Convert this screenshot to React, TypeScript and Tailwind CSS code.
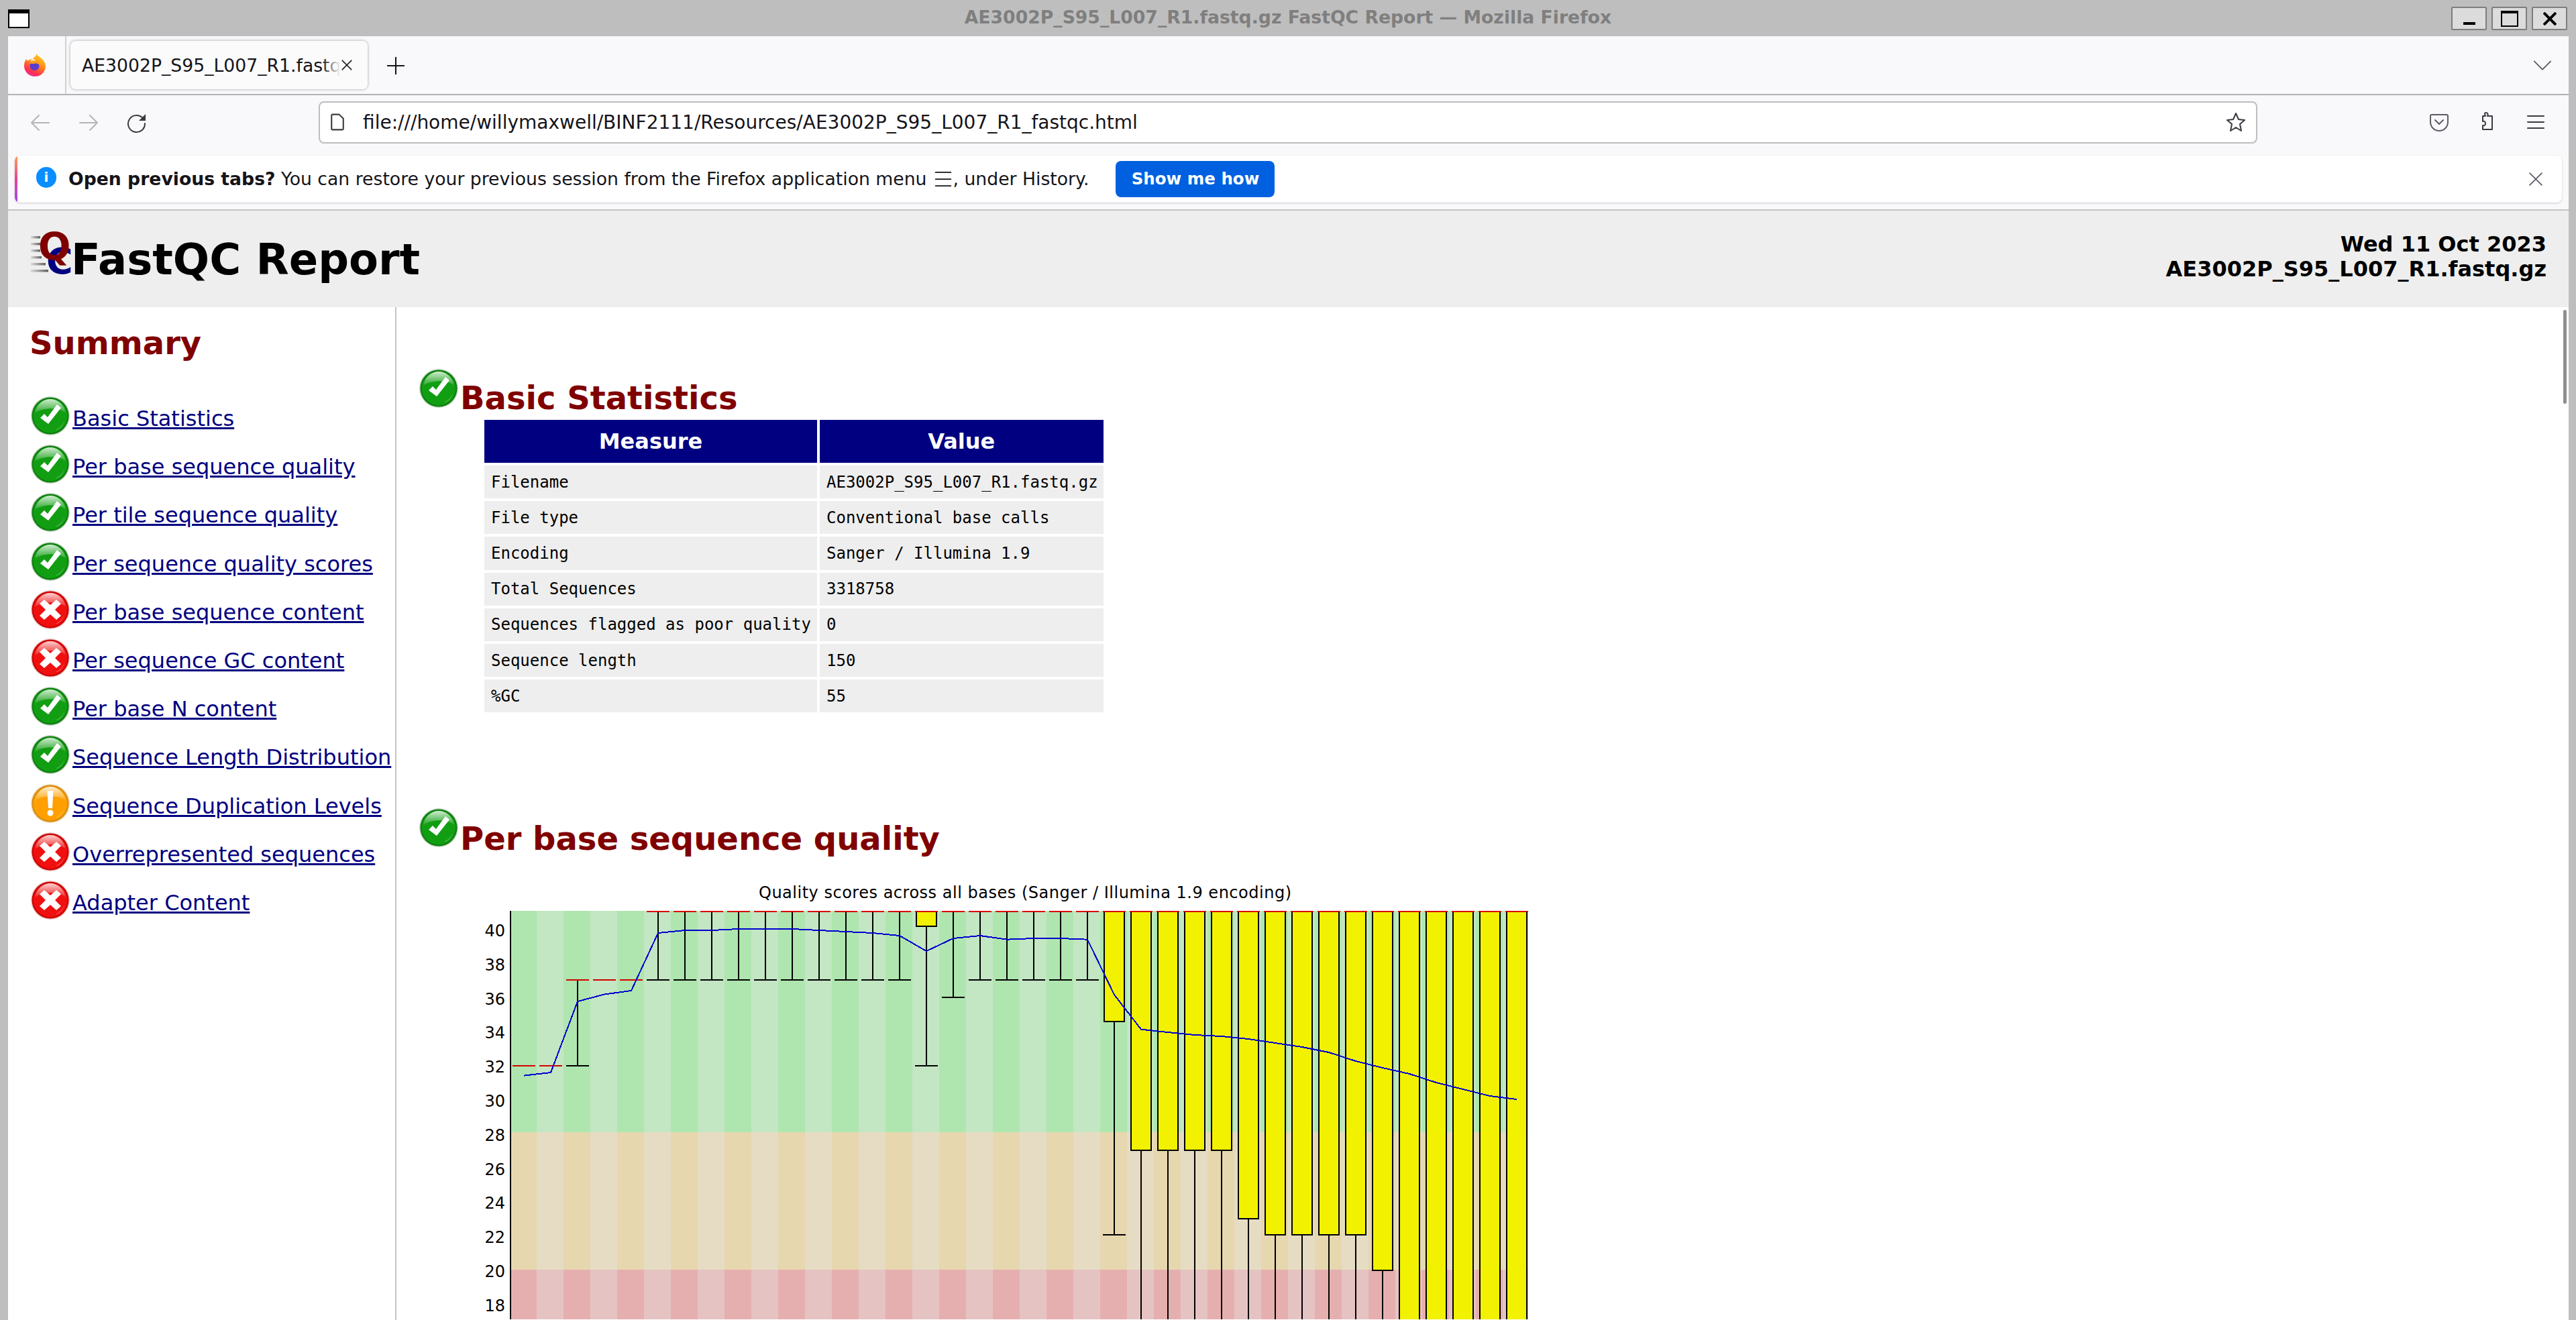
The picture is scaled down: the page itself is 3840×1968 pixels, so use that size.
import React from "react";

const DJ = "font-['DejaVu_Sans',sans-serif]";

function StatusIcon({ kind }: { kind: "ok" | "fail" | "warn" }) {
  const pal = {
    ok: ["#4fc04f", "#129e12", "#0c7c0c", "#c4d6c4"],
    fail: ["#ff6a6a", "#f01010", "#c80000", "#eccaca"],
    warn: ["#ffc560", "#ff9f00", "#d48a10", "#eed8b0"],
  }[kind];
  const id = `g-${kind}`;
  return (
    <svg width="58" height="60" viewBox="0 0 58 60" className="shrink-0 block">
      <defs>
        <linearGradient id={`${id}-h`} x1="0" y1="0" x2="0" y2="1">
          <stop offset="0" stopColor="#ffffff" stopOpacity="0.8" />
          <stop offset="1" stopColor="#ffffff" stopOpacity="0.08" />
        </linearGradient>
      </defs>
      <circle cx="29" cy="30" r="29" fill={pal[3]} />
      <circle cx="29" cy="30" r="27.500" fill={pal[2]} />
      <circle cx="29" cy="30" r="25.500" fill={pal[1]} />
      <path d="M6 26C8 13 18 5 29 5s21 8 23 21C44 17 17 17 6 26z" fill={`url(#${id}-h)`} />
      <path d="M50 38a24 24 0 0 1-13 13c6-1 11-7 13-13z" fill="#ffffff" opacity="0.55" />
      {kind === "ok" && <path d="M14 33l6-6 5 5 14-19 6 5-19 24z" fill="#ffffff" />}
      {kind === "fail" && (
        <path d="M20 15l9 8 9-8 7 6-9 9 9 9-7 6-9-8-9 8-7-6 9-9-9-9z" fill="#ffffff" />
      )}
      {kind === "warn" && (
        <>
          <path d="M24.500 11h9l-1.500 26h-6z" fill="#ffffff" />
          <circle cx="29" cy="44" r="4.500" fill="#ffffff" />
        </>
      )}
    </svg>
  );
}

const summary: [string, "ok" | "fail" | "warn"][] = [
  ["Basic Statistics", "ok"],
  ["Per base sequence quality", "ok"],
  ["Per tile sequence quality", "ok"],
  ["Per sequence quality scores", "ok"],
  ["Per base sequence content", "fail"],
  ["Per sequence GC content", "fail"],
  ["Per base N content", "ok"],
  ["Sequence Length Distribution", "ok"],
  ["Sequence Duplication Levels", "warn"],
  ["Overrepresented sequences", "fail"],
  ["Adapter Content", "fail"],
];

const stats = [
  ["Filename", "AE3002P_S95_L007_R1.fastq.gz"],
  ["File type", "Conventional base calls"],
  ["Encoding", "Sanger / Illumina 1.9"],
  ["Total Sequences", "3318758"],
  ["Sequences flagged as poor quality", "0"],
  ["Sequence length", "150"],
  ["%GC", "55"],
];

const means = [1604.6, 1600, 1494, 1483.5, 1478, 1392, 1388, 1388, 1386, 1386, 1386, 1388, 1390, 1392, 1396, 1419, 1400, 1396, 1401.7, 1400, 1400, 1401.7, 1484, 1535.7, 1540, 1544, 1546, 1550, 1556, 1562, 1570, 1583, 1593, 1602, 1615, 1625, 1635, 1640];

const bars: { redY: number; boxBottom?: number; capY?: number }[] = [
  { redY: 1590 },
  { redY: 1590 },
  { redY: 1462, capY: 1590 },
  { redY: 1462 },
  { redY: 1462 },
  ...Array.from({ length: 10 }, () => ({ redY: 1360, capY: 1462 })),
  { redY: 1360, boxBottom: 1382, capY: 1590 },
  { redY: 1360, capY: 1488 },
  ...Array.from({ length: 5 }, () => ({ redY: 1360, capY: 1462 })),
  { redY: 1360, boxBottom: 1524, capY: 1842 },
  ...Array.from({ length: 4 }, () => ({ redY: 1360, boxBottom: 1716, capY: 2100 })),
  { redY: 1360, boxBottom: 1818, capY: 2100 },
  ...Array.from({ length: 4 }, () => ({ redY: 1360, boxBottom: 1842, capY: 2100 })),
  { redY: 1360, boxBottom: 1895, capY: 2100 },
  ...Array.from({ length: 5 }, () => ({ redY: 1360, boxBottom: 2100, capY: 2100 })),
];

function Chart() {
  const cx = (i: number) => 781 + 40 * i;
  return (
    <svg width="1640" height="658" viewBox="700 1310 1640 658" className="block" fontFamily="'DejaVu Sans',sans-serif">
      <text x="1131" y="1340" fontSize="24" fill="#000" textLength="794">Quality scores across all bases (Sanger / Illumina 1.9 encoding)</text>
      <g shapeRendering="crispEdges">
        {bars.map((_, i) => {
          const x = i === 0 ? 762 : 760 + 40 * i;
          const w = i === 0 ? 38 : 40;
          const x2 = i === 37 ? 2278 - x : w;
          return (
            <g key={i}>
              <rect x={x} y={1359} width={x2} height={330} fill={i % 2 ? "#c3e6c3" : "#afe6af"} />
              <rect x={x} y={1689} width={x2} height={205} fill={i % 2 ? "#e6dcc3" : "#e6d7af"} />
              <rect x={x} y={1894} width={x2} height={100} fill={i % 2 ? "#e6c3c3" : "#e6afaf"} />
            </g>
          );
        })}
        <rect x={760} y={1359} width={2} height={620} fill="#000" />
        {bars.map((b, i) => {
          const c = cx(i);
          return (
            <g key={i}>
              {b.capY !== undefined && (
                <>
                  <line x1={c} x2={c} y1={b.redY} y2={b.capY} stroke="#000" strokeWidth={2} />
                  <line x1={c - 17} x2={c + 17} y1={b.capY} y2={b.capY} stroke="#000" strokeWidth={2} />
                </>
              )}
              {b.boxBottom !== undefined && (
                <rect x={c - 15} y={b.redY} width={30} height={b.boxBottom - b.redY} fill="#f2f200" stroke="#000" strokeWidth={2} />
              )}
              <line x1={c - 17} x2={c + 17} y1={b.redY} y2={b.redY} stroke="#d80000" strokeWidth={2} />
            </g>
          );
        })}
        <polyline points={means.map((y, i) => `${cx(i)},${y}`).join(" ")} fill="none" stroke="#0000d0" strokeWidth={2} />
      </g>
      {[40, 38, 36, 34, 32, 30, 28, 26, 24, 22, 20, 18].map((q) => (
        <text key={q} x={753} y={1397 + ((40 - q) / 2) * 50.8} textAnchor="end" fontSize="24" fill="#000">{q}</text>
      ))}
    </svg>
  );
}

function Firefox() {
  return (
    <svg width="34" height="34" viewBox="0 0 34 34" className="block">
      <defs>
        <linearGradient id="ff" x1="0.8" y1="0" x2="0.3" y2="1">
          <stop offset="0" stopColor="#ffdc20" />
          <stop offset="0.45" stopColor="#ff8a1a" />
          <stop offset="0.8" stopColor="#ff3050" />
          <stop offset="1" stopColor="#f0309a" />
        </linearGradient>
      </defs>
      <path d="M20 0c0 3 4 4 8 8 5 5 6 11 4 16-3 7-9 10-15 10C8 34 1 27 1 18c0-4 1-7 3-10l2 3c2-2 5-3 8-3 2-3 5-5 6-8z" fill="url(#ff)" />
      <path d="M14 8c-2 1-3 2-4 3l5 1c2-1 3-2 3-3z" fill="#fff3c0" />
      <circle cx="16.500" cy="18" r="7" fill="#5b3ccf" />
      <path d="M8 14c3-4 9-5 13-2 2 1 3 3 3 5-2-2-5-3-8-2-3 0-5 0-8-1z" fill="#ff9a1a" />
    </svg>
  );
}

function Stroke({ d, size = 32, color = "#5b5b66", w = 2 }: { d: string; size?: number; color?: string; w?: number }) {
  return (
    <svg width={size} height={size} viewBox="0 0 32 32" className="block shrink-0" fill="none" stroke={color} strokeWidth={w} strokeLinecap="round" strokeLinejoin="round">
      <path d={d} />
    </svg>
  );
}

function Reload() {
  return (
    <svg width="32" height="32" viewBox="0 0 32 32" className="block shrink-0">
      <path d="M25.500 10A12.500 12.500 0 1 0 28 17" fill="none" stroke="#3a3a42" strokeWidth="2" strokeLinecap="round" />
      <path d="M29 3v10H19z" fill="#3a3a42" />
    </svg>
  );
}

function Logo() {
  return (
    <svg width="64" height="68" viewBox="46 344 64 68" className="block shrink-0 overflow-visible" fontFamily="'DejaVu Sans',sans-serif" fontWeight="bold">
      <defs>
        <linearGradient id="sl" x1="0" x2="1" y1="0" y2="0">
          <stop offset="0" stopColor="#d8d8d8" />
          <stop offset="1" stopColor="#606060" />
        </linearGradient>
      </defs>
      {[[352, 14], [362, 14], [372, 14], [382, 16], [392, 22], [402, 26]].map(([y, w]) => (
        <rect key={y} x="46" y={y} width={w} height="3.500" fill="url(#sl)" />
      ))}
      <text x="69" y="408" fontSize="54" fill="#000080">C</text>
      <text x="57" y="388" fontSize="57" fill="#800000">Q</text>
    </svg>
  );
}

export default function App() {
  return (
    <div className={`h-screen w-full overflow-hidden bg-[#bebebe] flex flex-col ${DJ}`}>
      {/* title bar */}
      <div className="h-[54px] shrink-0 relative flex items-center justify-center pl-[12px] pr-[12px]">
        <div className="absolute left-[12px] top-[14px] w-[32px] h-[28px] border-2 border-black border-t-[6px] bg-white" />
        <div className="text-[26.67px] font-bold text-[#7f7f7f] -mt-[3px]">AE3002P_S95_L007_R1.fastq.gz FastQC Report — Mozilla Firefox</div>
        <div className="absolute right-[13px] top-[10px] flex gap-[7px]">
          <div className="w-[53px] h-[35px] border-2 border-[#7e7e7e] rounded-[2px] bg-[#dcdcdc] flex items-end justify-center pb-[6px]"><div className="w-[18px] h-[4px] bg-black" /></div>
          <div className="w-[53px] h-[35px] border-2 border-[#7e7e7e] rounded-[2px] bg-[#dcdcdc] flex items-center justify-center"><div className="w-[26px] h-[24px] border-2 border-t-[4px] border-black" /></div>
          <div className="w-[53px] h-[35px] border-2 border-[#7e7e7e] rounded-[2px] bg-[#dcdcdc] flex items-center justify-center">
            <svg width="20" height="20" viewBox="0 0 20 20" stroke="#000" strokeWidth="4"><path d="M1 1l18 18M19 1L1 19" /></svg>
          </div>
        </div>
      </div>

      <div className="flex-1 min-h-0 ml-[12px] mr-[11px] flex flex-col bg-[#f9f9fb]">
        {/* tabs */}
        <div className="h-[86px] shrink-0 flex items-center border-b-2 border-[#b1b1b3] box-content relative">
          <div className="w-[62px] h-full border-r-2 border-[#d0d0d2] flex items-center pl-[23px] shrink-0 box-content">
            <Firefox />
          </div>
          <div className="ml-[6px] w-[443px] h-[72px] rounded-[8px] bg-[#fbfbfb] shadow-[0_0_4px_rgba(0,0,0,0.35)] flex items-center pl-[17px] pr-[12px] pt-[2px] relative overflow-hidden">
            <span className="text-[26.67px] text-[#15141a] whitespace-nowrap">AE3002P_S95_L007_R1.fastq.gz</span>
            <div className="absolute right-0 top-0 bottom-0 w-[68px] bg-gradient-to-r from-transparent via-[#fbfbfb] via-[40%] to-[#fbfbfb] flex items-center justify-end pr-[22px]">
              <Stroke size={18} d="M4 4l24 24M28 4L4 28" w={3} color="#15141a" />
            </div>
          </div>
          <div className="ml-[27px] mt-[2px]"><Stroke size={30} d="M16 3v26M3 16h26" w={2.2} color="#15141a" /></div>
          <div className="ml-auto mr-[24px]"><Stroke size={30} d="M3 10l13 13 13-13" w={2} /></div>
        </div>

        {/* toolbar */}
        <div className="h-[90px] shrink-0 flex items-center pb-[10px] relative">
          <div className="ml-[32px] mt-[2px] flex gap-[40px] items-center shrink-0">
            <Stroke d="M14 5L3 16l11 11M3 16h26" color="#b4b4b8" />
            <Stroke d="M18 5l11 11-11 11M29 16H3" color="#b4b4b8" />
            <Reload />
          </div>
          <div className="ml-[255px] w-[2890px] h-[63px] rounded-[8px] border-2 border-[#bdbdbd] bg-white flex items-center pl-[12px] pr-[14px] shrink-0">
            <Stroke size={28} d="M7 3h12l7 7v17a2 2 0 0 1-2 2H8a2 2 0 0 1-2-2V4z" color="#3a3a42" w={2.4} />
            <span className="ml-[24px] pt-[2px] text-[28px] text-[#15141a] whitespace-nowrap">file:///home/willymaxwell/BINF2111/Resources/AE3002P_S95_L007_R1_fastqc.html</span>
            <div className="ml-auto"><Stroke d="M16 3l4 9 9 1-7 6 2 10-8-5-8 5 2-10-7-6 9-1z" color="#3a3a42" /></div>
          </div>
          <div className="flex items-center ml-[255px] gap-[40px] shrink-0">
            <Stroke d="M5 5h22a2 2 0 0 1 2 2v9a13 13 0 0 1-26 0V7a2 2 0 0 1 2-2zM10 13l6 6 6-6" color="#5b5b66" />
            <Stroke d="M14 2c3 0 3 3 2 5h7v20H9v-6c3 1 4-1 4-3s-1-4-4-3V7h4c-1-2-2-5 1-5z" color="#3a3a42" />
            <Stroke d="M4 7h24M4 16h24M4 25h24" color="#3a3a42" />
          </div>
        </div>

        {/* info bar */}
        <div className="h-[70px] shrink-0 ml-[10px] mr-[10px] rounded-[8px] bg-white shadow-[0_1px_3px_rgba(0,0,0,0.18)] flex items-center relative overflow-hidden">
          <div className="absolute left-0 top-0 bottom-0 w-[4px] bg-gradient-to-b from-[#ff9a3c] via-[#e8409a] to-[#9a40f0]" />
          <div className="ml-[32px] w-[30px] h-[31px] rounded-full bg-[#0a8dff] flex items-center justify-center shrink-0 -mt-[6px]">
            <span className="text-white font-bold text-[20px] leading-none">i</span>
          </div>
          <span className="ml-[18px] text-[26.67px] text-[#15141a] whitespace-nowrap"><b>Open previous tabs?</b> You can restore your previous session from the Firefox application menu</span>
          <div className="ml-[11px] shrink-0"><Stroke size={28} d="M3 4.500h26M3 16h26M3 27.500h26" color="#15141a" /></div>
          <span className="text-[26.67px] text-[#15141a] whitespace-nowrap">, under History.</span>
          <div className="ml-[40px] w-[237px] h-[54px] rounded-[8px] bg-[#0060df] text-white font-bold text-[24.5px] flex items-center justify-center shrink-0">Show me how</div>
          <div className="ml-auto mr-[28px]"><Stroke size={22} d="M3 3l26 26M29 3L3 29" color="#5b5b66" w={2.5} /></div>
        </div>

        <div className="h-[10px] shrink-0" />
        {/* page */}
        <div className="flex-1 min-h-0 border-t-2 border-[#c4c4c4] bg-white flex flex-col relative overflow-hidden">
          <div className="absolute right-[3px] top-[148px] w-[5px] h-[140px] rounded-full bg-[#8f8f8f]" />
          <div className="h-[144px] shrink-0 bg-[#eeeeee] flex items-start justify-between pl-[34px] pr-[33px]">
            <div className="flex items-start pt-[30px]">
              <Logo />
              <div className="text-[64px] font-bold text-black leading-none -ml-[4px] mt-[11px]">FastQC Report</div>
            </div>
            <div className="text-right text-[32px] font-bold text-black leading-[37px] pt-[32px]">
              <div>Wed 11 Oct 2023</div>
              <div>AE3002P_S95_L007_R1.fastq.gz</div>
            </div>
          </div>
          <div className="flex-1 min-h-0 flex overflow-hidden">
            <div className="w-[579px] shrink-0 border-r-2 border-[#c4c4c4] pl-[34px]">
              <div className="-ml-[2px] text-[48px] font-bold text-[#800000] leading-[56px] mt-[25px] mb-[51px]">Summary</div>
              <ul>
                {summary.map(([t, k]) => (
                  <li key={t} className="h-[72.2px] flex items-start">
                    <StatusIcon kind={k} />
                    <a href="#" className="ml-[4px] mt-[10px] text-[32px] text-[#000080] underline whitespace-nowrap">{t}</a>
                  </li>
                ))}
              </ul>
            </div>
            <div className="flex-1 min-w-0 pl-[34px] pt-[91px]">
              <div className="flex items-start h-[73px]">
                <StatusIcon kind="ok" />
                <h2 className="ml-[3px] mt-[8px] text-[48px] font-bold text-[#800000] leading-normal">Basic Statistics</h2>
              </div>
              <table className="ml-[93px] border-separate border-spacing-[4px] font-['DejaVu_Sans_Mono',monospace] text-[24px]">
                <thead>
                  <tr>
                    <th className={`h-[64px] w-[496px] bg-[#000080] text-white text-[32px] font-bold text-center ${DJ}`}>Measure</th>
                    <th className={`h-[64px] w-[422px] bg-[#000080] text-white text-[32px] font-bold text-center ${DJ}`}>Value</th>
                  </tr>
                </thead>
                <tbody>
                  {stats.map(([a, b]) => (
                    <tr key={a}>
                      <td className="h-[49.200px] bg-[#eeeeee] pl-[10px] pr-[8px] whitespace-pre text-black">{a}</td>
                      <td className="h-[49.200px] bg-[#eeeeee] pl-[10px] pr-[8px] whitespace-pre text-black">{b}</td>
                    </tr>
                  ))}
                </tbody>
              </table>
              <div className="mt-[138px] flex items-start h-[105px]">
                <StatusIcon kind="ok" />
                <h2 className="ml-[3px] mt-[10px] text-[48px] font-bold text-[#800000] leading-normal">Per base sequence quality</h2>
              </div>
              <div className="ml-[75px]"><Chart /></div>
            </div>
          </div>
        </div>
      </div>
    </div>
  );
}
